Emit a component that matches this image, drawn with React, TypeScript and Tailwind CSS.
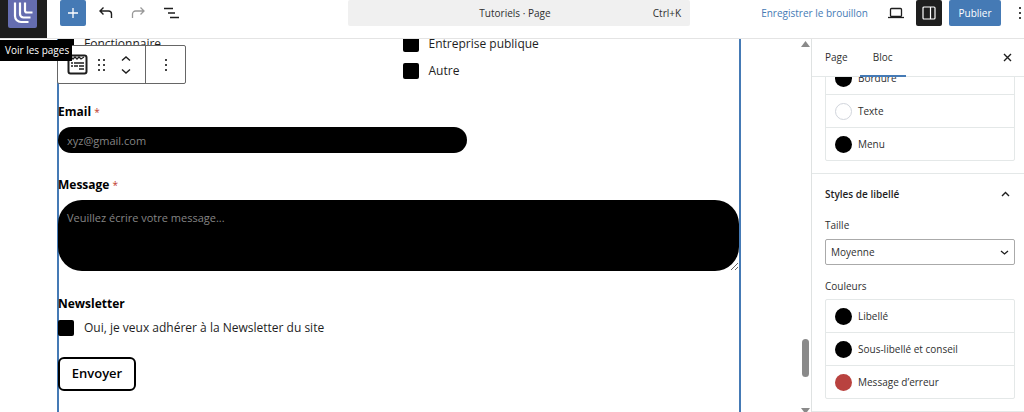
import React from "react";

const swatchesTop = [
  { label: "Bordure", color: "bg-black" },
  { label: "Texte", color: "border border-gray-300 bg-white" },
  { label: "Menu", color: "bg-black" },
];

const swatchesLabel = [
  { label: "Libellé", color: "bg-black" },
  { label: "Sous-libellé et conseil", color: "bg-black" },
  { label: "Message d’erreur", color: "bg-[#b9423f]" },
];

const SwatchList = ({ items }: { items: { label: string; color: string }[] }) => (
  <ul className="border border-[#e4e8e8] divide-y divide-[#e4e8e8] rounded-xs">
    {items.map((item) => (
      <li key={item.label}>
        <button type="button" className="flex items-center w-full h-8 px-[9px] gap-[6px]">
          <span className={`w-[17px] h-[17px] rounded-full ${item.color}`}></span>
          <span>{item.label}</span>
        </button>
      </li>
    ))}
  </ul>
);

const CheckRow = ({ label }: { label: string }) => (
  <label className="flex items-center h-[27px] gap-[10px] text-[12px]">
    <input type="checkbox" className="appearance-none shrink-0 w-4 h-4 rounded-xs bg-black" />
    {label}
  </label>
);

const Dots = () => (
  <svg width="4" height="14" viewBox="0 0 4 14" fill="#444">
    <rect x="1" y="1" width="2" height="2" />
    <rect x="1" y="6" width="2" height="2" />
    <rect x="1" y="11" width="2" height="2" />
  </svg>
);

const Header = () => {
  return (
    <header className="flex h-[39px] shrink-0 border-b border-[#e4e4e4]">
      {/* Site logo */}
      <div className="relative w-[47px] h-[38px] bg-[#1e1e1e]">
        <a href="#" aria-label="Voir les pages" className="block w-[29px] ml-2">
          <svg width="29" height="28" viewBox="0 0 29 28">
            <path d="M0 0h29v26a2 2 0 0 1-2 2H2a2 2 0 0 1-2-2z" fill="#656db0" />
            <g fill="none" stroke="#fff" strokeWidth="2.200">
              <path d="M7 2.500v13.500a6 6 0 0 0 6 6h7.500" />
              <path d="M12 2.500v11.500a3.500 3.500 0 0 0 3.500 3.500h7" />
              <path d="M17 2.500v8a2 2 0 0 0 2 2h5.500" />
            </g>
          </svg>
        </a>
        <span className="absolute z-20 top-10 left-0 flex items-center w-[72px] h-[21px] pl-[5px] bg-black text-white text-[10px] whitespace-nowrap">
          Voir les pages
        </span>
      </div>
      <div className="flex flex-1 items-center pb-3 pl-[13px]">
        <button type="button" aria-label="Ajouter" className="flex items-center justify-center w-[26px] h-[26px] rounded-xs bg-[#457ab5]">
          <svg width="12" height="12" viewBox="0 0 12 12" stroke="#fff" strokeWidth="1.300">
            <path d="M6 1v10M1 6h10" />
          </svg>
        </button>
        <div className="flex flex-1 items-center pl-3 gap-[18px]">
          <button type="button" aria-label="Annuler">
            <svg width="15" height="14" viewBox="0 0 15 14" fill="none" stroke="#1e1e1e" strokeWidth="1.400">
              <path d="M5.500 1.500 2 5l3.500 3.500M2 5h8.500a3 3 0 0 1 3 3v4" />
            </svg>
          </button>
          <button type="button" aria-label="Rétablir">
            <svg width="15" height="14" viewBox="0 0 15 14" fill="none" stroke="#999" strokeWidth="1.300">
              <path d="M9.500 1.500 13 5 9.500 8.500M13 5H4.500a3 3 0 0 0-3 3v4" />
            </svg>
          </button>
          <button type="button" aria-label="Vue en liste">
            <svg width="16" height="14" viewBox="0 0 16 14" fill="none" stroke="#1e1e1e" strokeWidth="1.400">
              <path d="M0 2.500h9M4 7h7M6 11.500h9" />
            </svg>
          </button>
        </div>
        <button type="button" className="flex items-center w-[342px] h-[26px] px-[9px] rounded-xs bg-[#f0f0f0] text-[10px] text-[#2f2f2f]">
          <span className="flex-1 pl-5">Tutoriels · Page</span>
          <span>Ctrl+K</span>
        </button>
      </div>
      <div className="flex items-center justify-end pb-3 pl-[71px] text-[10px]">
        <button type="button" className="text-[#457ab5]">Enregistrer le brouillon</button>
        <button type="button" aria-label="Aperçu" className="ml-5">
          <svg width="16" height="12" viewBox="0 0 16 12" fill="none" stroke="#1e1e1e" strokeWidth="1.300">
            <rect x="2.500" y="1.500" width="11" height="8" rx="1" />
            <path d="M0 10.500h16" />
          </svg>
        </button>
        <button type="button" aria-label="Réglages" className="flex items-center justify-center w-[26px] h-[26px] ml-3 rounded-xs bg-[#1e1e1e]">
          <svg width="14" height="14" viewBox="0 0 14 14" fill="none" stroke="#fff" strokeWidth="1.200">
            <rect x="1" y="1" width="12" height="12" rx="1" />
            <path d="M8.500 1v12" />
          </svg>
        </button>
        <button type="button" className="w-[52px] h-[26px] ml-[7px] rounded-xs bg-[#457ab5] text-white">Publier</button>
        <button type="button" aria-label="Options" className="ml-[17px] mr-[2px]">
          <Dots />
        </button>
      </div>
    </header>
  );
};

const BlockToolbar = () => (
  <div className="absolute z-10 top-[6px] left-[57px] flex items-center w-[129px] h-[39px] border border-[#666] rounded-xs bg-white">
    <button type="button" aria-label="Formulaire" className="ml-[9px]">
      <svg width="21" height="21" viewBox="0 0 21 21" fill="none" stroke="#1e1e1e">
        <rect x="1.500" y="1.500" width="18" height="18" rx="2" strokeWidth="2" />
        <path d="M4 3l2 2 2-2 2 2 2-2 2 2 3-2" strokeWidth="1.300" />
        <path d="M4 9h2M7 9h10M4 12h2M7 12h4M12 12h5M12 15h5" strokeWidth="1.700" />
      </svg>
    </button>
    <button type="button" aria-label="Déplacer" className="ml-[9px]">
      <svg width="9" height="14" viewBox="0 0 9 14" fill="#444">
        <path d="M1 1h2v2H1zM6 1h2v2H6zM1 6h2v2H1zM6 6h2v2H6zM1 11h2v2H1zM6 11h2v2H6z" />
      </svg>
    </button>
    <button type="button" aria-label="Monter ou descendre" className="ml-[14px]">
      <svg width="12" height="20" viewBox="0 0 12 20" fill="none" stroke="#1e1e1e" strokeWidth="1.400">
        <path d="M2 5.500 6 2l4 3.500M2 14.500 6 18l4-3.500" />
      </svg>
    </button>
    <div className="h-full ml-[13px] border-l border-[#666]"></div>
    <button type="button" aria-label="Options du bloc" className="mx-auto">
      <Dots />
    </button>
  </div>
);

const FormCanvas = () => {
  return (
    <form className="flex-1 ml-[57px] mr-[59px] border-x-2 border-[#457ab5]">
      <div className="-ml-px -mt-[9px] pb-5">
        <div className="grid grid-cols-2 gap-x-2">
          <CheckRow label="Fonctionnaire" />
          <CheckRow label="Entreprise publique" />
          <div></div>
          <CheckRow label="Autre" />
        </div>
        {/* Email */}
        <label htmlFor="email" className="block h-5 mt-[18px] text-[12px] leading-5 font-bold text-black">
          Email <span className="text-[10px] text-[#c0392b] font-normal">*</span>
        </label>
        <input
          id="email"
          type="email"
          placeholder="xyz@gmail.com"
          className="block w-3/5 h-[26px] mt-[5px] px-[9px] rounded-full bg-black text-[11px] text-white placeholder:text-[#858585]"
        />
        {/* Message */}
        <label htmlFor="message" className="block h-5 mt-[22px] text-[12px] leading-5 font-bold text-black">
          Message <span className="text-[10px] text-[#c0392b] font-normal">*</span>
        </label>
        <textarea
          id="message"
          placeholder="Veuillez écrire votre message..."
          className="block w-full h-[71px] mt-[5px] px-[9px] py-[10px] rounded-3xl bg-black text-[11px] leading-4 text-white placeholder:text-[#858585]"
        />
        {/* Newsletter */}
        <fieldset className="mt-[23px]">
          <legend className="h-5 text-[12px] leading-5 font-bold text-black">Newsletter</legend>
          <CheckRow label="Oui, je veux adhérer à la Newsletter du site" />
        </fieldset>
        <button type="button" className="w-[78px] h-[34px] mt-4 border-2 border-black rounded-md text-[13px] font-semibold text-black">
          Envoyer
        </button>
      </div>
    </form>
  );
};

const Scrollbar = () => (
  <div className="flex flex-col items-center w-[11px] pt-[2px]">
    <svg width="9" height="6" viewBox="0 0 9 6" fill="#8a8a8a">
      <path d="M4.500 0 9 6H0z" />
    </svg>
    <div className="flex-[292]"></div>
    <div className="w-[7px] h-[38px] rounded-full bg-[#8a8a8a]"></div>
    <div className="flex-[31]"></div>
    <svg width="9" height="4" viewBox="0 0 9 4" fill="#8a8a8a">
      <path d="M0 0h9L6 4H3z" />
    </svg>
  </div>
);

const Sidebar = () => {
  return (
    <aside className="flex flex-col w-[213px] shrink-0 border-l border-[#dfe2e2] text-[10px] text-[#2f2f2f]">
      <div className="flex shrink-0 h-[38px] pl-[13px] border-b border-[#e4e8e8]">
        <button type="button">Page</button>
        <button type="button" className="relative w-[46px] ml-3">
          Bloc
          <span className="absolute left-0 -bottom-px w-full h-[2px] bg-[#457ab5]"></span>
        </button>
        <button type="button" aria-label="Fermer" className="ml-auto mr-3">
          <svg width="9" height="9" viewBox="0 0 9 9" stroke="#1e1e1e" strokeWidth="1.400">
            <path d="M1 1l7 7M8 1 1 8" />
          </svg>
        </button>
      </div>
      <div className="flex-1 overflow-hidden">
        <div className="-mt-[16px] pb-3 pl-[13px] pr-[9px] border-b border-[#e4e8e8]">
          <SwatchList items={swatchesTop} />
        </div>
        <div className="pl-[13px] pr-[9px] pb-3 border-b border-[#e4e8e8]">
          <button type="button" className="flex items-center justify-between w-full h-10 pr-[5px] font-semibold text-[#1e1e1e]">
            Styles de libellé
            <svg width="9" height="6" viewBox="0 0 9 6" fill="none" stroke="#1e1e1e" strokeWidth="1.400">
              <path d="M1 5l3.500-3.500L8 5" />
            </svg>
          </button>
          <label htmlFor="taille" className="block h-5 mt-px leading-5">Taille</label>
          <div className="relative mt-1">
            <select id="taille" defaultValue="Moyenne" className="appearance-none block w-full h-[26px] px-[5px] border border-[#aaa] rounded-xs bg-white">
              <option>Petite</option>
              <option>Moyenne</option>
              <option>Grande</option>
            </select>
            <svg className="absolute right-[6px] top-[11px]" width="9" height="5" viewBox="0 0 9 5" fill="none" stroke="#1e1e1e" strokeWidth="1.300">
              <path d="M1 1l3.500 3L8 1" />
            </svg>
          </div>
          <p className="h-5 mt-[11px] mb-[3px] leading-5">Couleurs</p>
          <SwatchList items={swatchesLabel} />
        </div>
      </div>
    </aside>
  );
};

const App = () => {
  return (
    <div className="flex flex-col h-screen overflow-hidden bg-white text-[#1e1e1e] font-['Open_Sans','Noto_Sans',sans-serif]">
      <Header />
      <div className="flex flex-1 min-h-0">
        <main className="relative flex flex-1 min-w-0">
          <BlockToolbar />
          <div className="flex flex-1 min-w-0 overflow-hidden">
            <FormCanvas />
          </div>
          <Scrollbar />
        </main>
        <Sidebar />
      </div>
    </div>
  );
};

export default App;
